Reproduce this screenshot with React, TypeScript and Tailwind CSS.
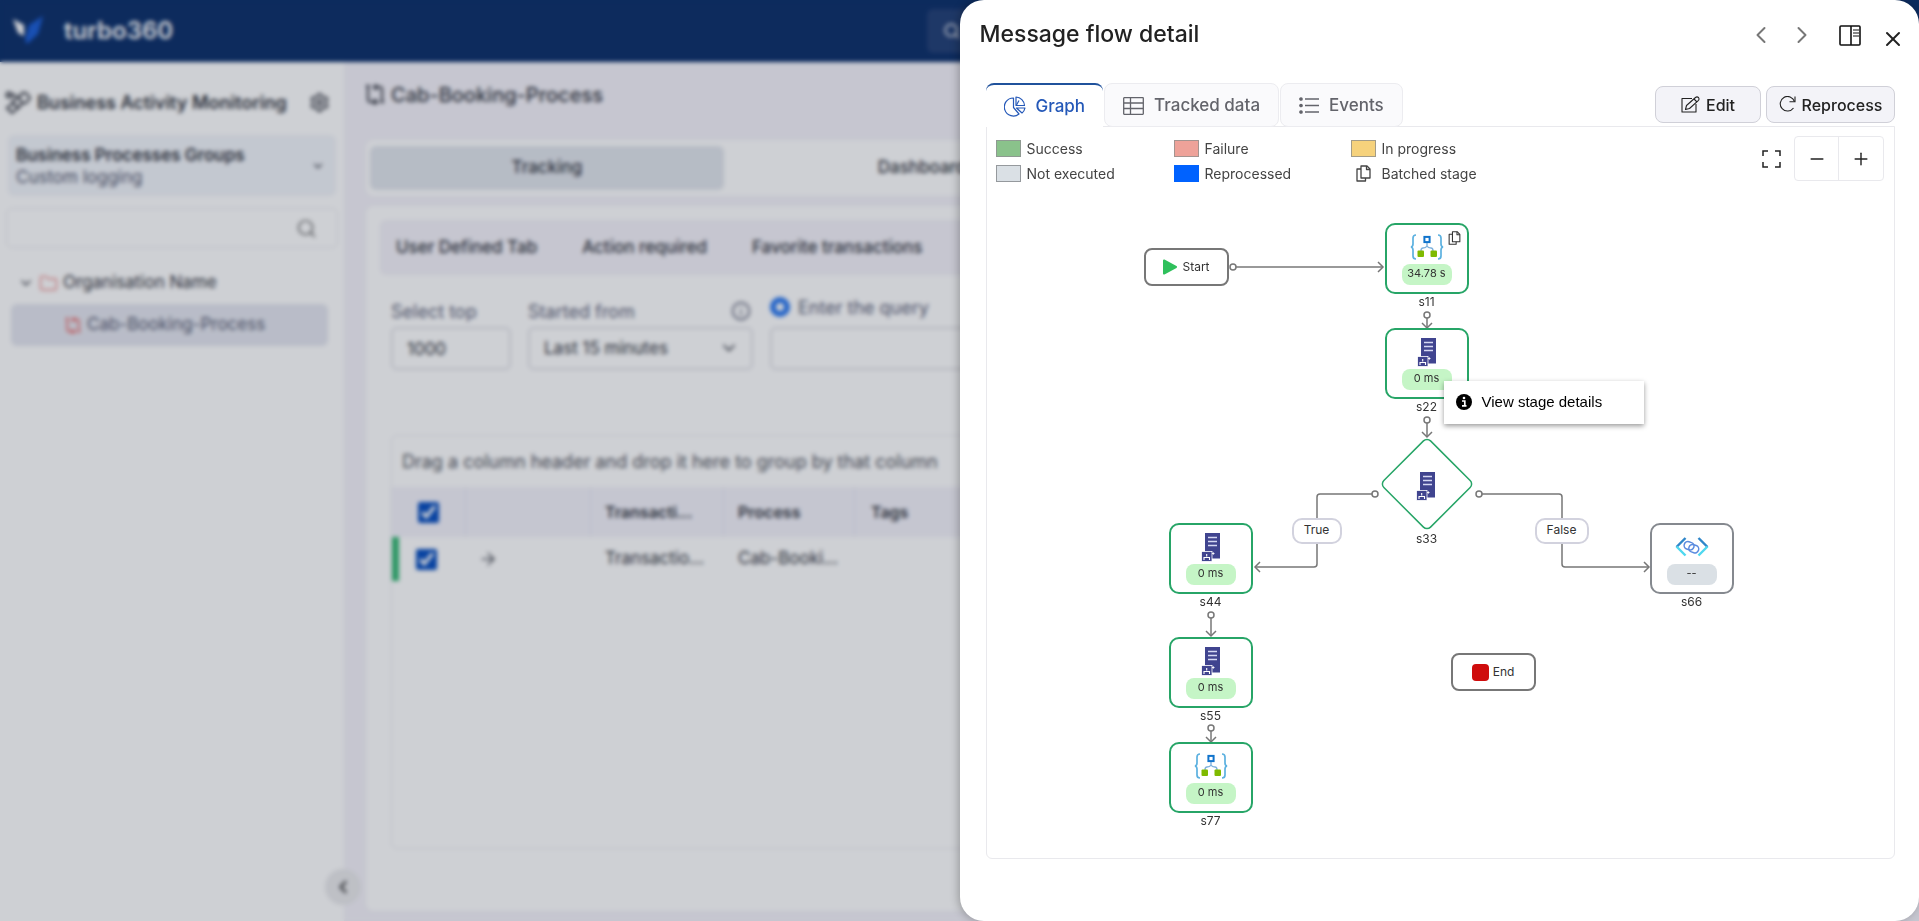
import { useState, type ReactNode } from 'react'
import {
  ArrowRight,
  ChevronDown,
  ChevronLeft,
  ChevronRight,
  Folder,
  Info,
  Minus,
  Plus,
  Search,
  Settings,
  X,
} from 'lucide-react'

type IconKind = 'logic' | 'server' | 'api'

type Stage = {
  id: string
  x: number
  y: number
  icon: IconKind
  time: string
  executed: boolean
  batched?: boolean
}

const STAGES: Stage[] = [
  { id: 's11', x: 398, y: 96, icon: 'logic', time: '34.78 s', executed: true, batched: true },
  { id: 's22', x: 398, y: 201, icon: 'server', time: '0 ms', executed: true },
  { id: 's44', x: 182, y: 396, icon: 'server', time: '0 ms', executed: true },
  { id: 's55', x: 182, y: 510, icon: 'server', time: '0 ms', executed: true },
  { id: 's77', x: 182, y: 615, icon: 'logic', time: '0 ms', executed: true },
  { id: 's66', x: 663, y: 396, icon: 'api', time: '--', executed: false },
]

// start circle, path and arrow head of every connector
const EDGES = [
  { cx: 246, cy: 140, line: 'M249 140H395', head: 'M391 135L396 140L391 145' },
  { cx: 440, cy: 188, line: 'M440 191V200', head: 'M435 196L440 201L445 196' },
  { cx: 440, cy: 293, line: 'M440 296V309', head: 'M435 305L440 310L445 305' },
  { cx: 388, cy: 367, line: 'M385 367H333Q330 367 330 370V437Q330 440 327 440H269', head: 'M273 435L268 440L273 445' },
  { cx: 492, cy: 367, line: 'M495 367H572Q575 367 575 370V437Q575 440 578 440H661', head: 'M657 435L662 440L657 445' },
  { cx: 224, cy: 488, line: 'M224 491V508', head: 'M219 504L224 509L229 504' },
  { cx: 224, cy: 601, line: 'M224 604V614', head: 'M219 610L224 615L229 610' },
]

const LEGEND = [
  { label: 'Success', color: 'bg-[#8ac28b] border-[#8f9a92]' },
  { label: 'Failure', color: 'bg-[#eea299] border-[#a39490]' },
  { label: 'In progress', color: 'bg-[#f6d27c] border-[#a39c88]' },
  { label: 'Not executed', color: 'bg-[#dae0e5] border-[#95999d]' },
  { label: 'Reprocessed', color: 'bg-[#0062ff] border-[#0062ff]' },
]

function LogoIcon() {
  return (
    <svg width="32" height="30" viewBox="0 0 32 30">
      <path d="M1 3L12 9V20L6 17Z" fill="#ffffff" />
      <path d="M31 0L26 18L15 28L13 24L17 9Z" fill="#1d5fd6" />
    </svg>
  )
}

function ActivityIcon() {
  return (
    <svg width="27" height="24" viewBox="0 0 27 24" fill="none" stroke="currentColor" strokeWidth="2">
      <path d="M9 12L14 17L8 22L3 17Z" />
      <path d="M8 12L13 6H16M14 17L18 13" />
      <path d="M18 2H22L26 7L22 12H18L15 7Z" />
      <circle cx="5" cy="4" r="2.500" />
      <path d="M7 4H12" />
    </svg>
  )
}

function ProcessIcon({ className }: { className?: string }) {
  return (
    <svg width="22" height="21" viewBox="0 0 22 21" fill="none" stroke="currentColor" strokeWidth="2" className={className}>
      <path d="M2 2H6M4 2V15Q4 18 7 18H12M10 15L13 18L10 20.500" />
      <path d="M18 19V6Q18 3 16 3H11M12.500 0.500L10 3L12.500 6M16 18H20" />
    </svg>
  )
}

function PieIcon() {
  return (
    <svg width="22" height="21" viewBox="0 0 22 21" fill="none" stroke="currentColor" strokeWidth="1.2" strokeLinejoin="round">
      <path d="M9.500 2A9 9 0 1 0 15 18L9.500 11.500Z" />
      <path d="M12 1V9.500H20.500A9 9 0 0 0 12 1Z" />
      <path d="M15 4.500L12.500 9" />
      <path d="M12.500 12H21A8.500 8.500 0 0 1 18 17Z" />
    </svg>
  )
}

function TableIcon() {
  return (
    <svg width="21" height="18" viewBox="0 0 21 18" fill="none" stroke="currentColor" strokeWidth="1.3">
      <rect x="0.700" y="0.700" width="19.600" height="16.600" rx="0.500" />
      <path d="M7.500 1V17M1 6H20M1 11.500H20" />
    </svg>
  )
}

function ListIcon() {
  return (
    <svg width="20" height="17" viewBox="0 0 20 17" stroke="currentColor" strokeWidth="1.3" fill="currentColor">
      <path d="M6 2H20M6 8.500H20M6 15H20" />
      <circle cx="2" cy="2" r="1.200" />
      <circle cx="2" cy="8.500" r="1.200" />
      <circle cx="2" cy="15" r="1.200" />
    </svg>
  )
}

function EditIcon() {
  return (
    <svg width="19" height="17" viewBox="0 0 19 17" fill="none" stroke="currentColor" strokeWidth="1.100" strokeLinejoin="round">
      <path d="M11 2.500H1V16H15V8" />
      <path d="M5.500 9.500L14.500 1.500Q16 0.300 17.500 1.500Q18.500 3 17.500 4.300L8.500 12.500L4.500 13.500Z" />
      <path d="M13 3L16 6" />
    </svg>
  )
}

function RedoIcon() {
  return (
    <svg width="17" height="17" viewBox="0 0 17 17" fill="none" stroke="currentColor" strokeWidth="1.100">
      <path d="M14.500 12A7.300 7.300 0 1 1 15.500 5.500" />
      <path d="M16 0.500V5.700H10.500" />
    </svg>
  )
}

function CopyIcon({ className }: { className?: string }) {
  return (
    <svg width="15" height="17" viewBox="0 0 15 17" fill="none" stroke="currentColor" strokeWidth="1.300" strokeLinejoin="round" className={className}>
      <path d="M5 1H11L14 4V13H5Z" />
      <path d="M10.500 1V4.500H14" />
      <path d="M5 4H1V16H9.500V13" />
    </svg>
  )
}

function PanelIcon() {
  return (
    <svg width="22" height="21" viewBox="0 0 22 21" fill="none" stroke="#111111" strokeWidth="1.600">
      <rect x="1" y="1" width="20" height="19" rx="1" />
      <path d="M12 1V20" />
      <path d="M14 5H20M14 8H20M14 11H20" strokeWidth="1" />
    </svg>
  )
}

function FullscreenIcon() {
  return (
    <svg width="19" height="18" viewBox="0 0 19 18" fill="none" stroke="#222222" strokeWidth="1.500">
      <path d="M1 6V1H6M13 1H18V6M18 12V17H13M6 17H1V12" />
    </svg>
  )
}

function LogicIcon() {
  return (
    <svg width="34" height="26" viewBox="0 0 34 26" fill="none">
      <path d="M6 1Q3 1 3 4V10Q3 12.500 1 13Q3 13.500 3 16V22Q3 25 6 25M28 1Q31 1 31 4V10Q31 12.500 33 13Q31 13.500 31 16V22Q31 25 28 25" stroke="#5cb1e0" strokeWidth="1.700" />
      <path d="M17 8V12M17 12Q16 14 13 14Q11 14 11 17M17 12Q18 14 21 14Q23 14 23 17" stroke="#7fb2dd" strokeWidth="1.400" />
      <rect x="14.400" y="2.900" width="5.200" height="5.200" fill="#ffffff" stroke="#1174cc" strokeWidth="2" />
      <rect x="7.500" y="16.500" width="6.500" height="6.500" rx="1" fill="#7fba00" />
      <rect x="20.500" y="16.500" width="6.500" height="6.500" rx="1" fill="#7fba00" />
    </svg>
  )
}

function ServerIcon() {
  return (
    <svg width="20" height="29" viewBox="0 0 20 29" fill="none">
      <rect x="4" y="0" width="15" height="25.500" fill="#40448f" />
      <path d="M7 4.500H16M7 8.500H16M7 12.500H16" stroke="#d5d8f3" strokeWidth="1.600" />
      <rect x="0.500" y="18.500" width="10.500" height="10" fill="#40448f" stroke="#ffffff" strokeWidth="0.800" />
      <path d="M5.700 21V23.500M3 27V24.500H8.500V27" stroke="#ffffff" strokeWidth="1.100" />
      <path d="M11 20.500H13.500M12.300 19.300V21.700" stroke="#ffffff" strokeWidth="0.900" />
    </svg>
  )
}

function ApiIcon() {
  return (
    <svg width="34" height="20" viewBox="0 0 34 20" fill="none" strokeWidth="2.400">
      <path d="M10.500 1L1.500 10" stroke="#2f86c9" />
      <path d="M1.500 9.500L10.500 18.500" stroke="#4fd8ef" />
      <path d="M23.500 1L32.500 10" stroke="#2f86c9" />
      <path d="M32.500 9.500L23.500 18.500" stroke="#4fd8ef" />
      <rect x="9" y="5" width="10" height="7.500" rx="3.700" transform="rotate(18 14 9)" stroke="#5b8bdf" strokeWidth="1.500" />
      <rect x="14" y="8" width="10" height="7.500" rx="3.700" transform="rotate(18 19 11)" stroke="#5b8bdf" strokeWidth="1.500" />
    </svg>
  )
}

function StageIcon({ kind }: { kind: IconKind }) {
  if (kind === 'logic') return <LogicIcon />
  if (kind === 'api') return <ApiIcon />
  return <ServerIcon />
}

function StageNode({ stage }: { stage: Stage }) {
  return (
    <div className="absolute flex w-[84px] flex-col items-center" style={{ left: stage.x, top: stage.y }}>
      <div
        className={`flex h-[71px] w-full flex-col items-center rounded-[10px] border-2 bg-white ${
          stage.executed ? 'border-[#27a567]' : 'border-[#85898f]'
        }`}
      >
        <div className="flex h-[38px] items-center justify-center pt-[6px]">
          <StageIcon kind={stage.icon} />
        </div>
        <span
          className={`mt-px flex h-[21px] w-[50px] items-center justify-center rounded-lg pb-[2px] text-[11px] text-[#333333] ${
            stage.executed ? 'bg-[#c5f5c6]' : 'bg-[#dae0e5]'
          }`}
        >
          {stage.time}
        </span>
      </div>
      <span className="text-[12px] leading-4 text-[#333333]">{stage.id}</span>
      {stage.batched && <CopyIcon className="absolute top-2 right-2 h-[14px] w-[13px] text-[#333333]" />}
    </div>
  )
}

function FlowGraph() {
  return (
    <div className="absolute inset-0">
      <svg className="absolute inset-0 h-full w-full" fill="none" stroke="#777777" strokeWidth="1.500">
        {EDGES.map((e) => (
          <g key={e.line}>
            <path d={e.line} />
            <path d={e.head} />
            <circle cx={e.cx} cy={e.cy} r="3" fill="#ffffff" />
          </g>
        ))}
        <rect x="407" y="324" width="66" height="66" rx="5" transform="rotate(45 440 357)" fill="#ffffff" stroke="#27a567" />
      </svg>

      <div className="absolute top-[121px] left-[157px] flex h-[38px] w-[85px] items-center justify-center gap-1 rounded-lg border-2 border-[#777777] bg-white text-[12px] text-[#333333]">
        <svg width="16" height="16" viewBox="0 0 16 16">
          <path d="M2 1.500L14 8L2 14.500Z" fill="#2fc05c" stroke="#2fc05c" strokeWidth="2" strokeLinejoin="round" />
        </svg>
        Start
      </div>
      <div className="absolute top-[526px] left-[464px] flex h-[38px] w-[85px] items-center justify-center gap-1 rounded-lg border-2 border-[#777777] bg-white text-[12px] text-[#333333]">
        <span className="size-[17px] rounded-sm bg-[#cf0c0c]" />
        End
      </div>

      {STAGES.map((s) => (
        <StageNode key={s.id} stage={s} />
      ))}

      <div className="absolute top-[345px] left-[429px]">
        <ServerIcon />
      </div>
      <span className="absolute top-[404px] left-[428px] w-6 text-center text-[12px] leading-4 text-[#333333]">s33</span>

      <span className="absolute top-[391px] left-[305px] flex h-[26px] w-[50px] items-center justify-center rounded-[10px] border-2 border-[#d2d2de] bg-white pb-[2px] text-[12px] text-[#333333]">
        True
      </span>
      <span className="absolute top-[391px] left-[548px] flex h-[26px] w-[54px] items-center justify-center rounded-[10px] border-2 border-[#d2d2de] bg-white pb-[2px] text-[12px] text-[#333333]">
        False
      </span>

      <div className="absolute top-[254px] left-[457px] flex h-[43px] w-[200px] items-center bg-white px-3 pb-px shadow-[0_2px_5px_rgba(0,0,0,0.4)]">
        <button className="flex items-center gap-[10px] font-['Liberation_Sans',Arial,sans-serif] text-[15px] text-black">
          <svg width="16" height="16" viewBox="0 0 16 16">
            <circle cx="8" cy="8" r="8" fill="#000000" />
            <path d="M6 7H8.800V11.500M6 11.800H10.500" stroke="#ffffff" strokeWidth="1.700" fill="none" />
            <circle cx="8" cy="4" r="1.300" fill="#ffffff" />
          </svg>
          View stage details
        </button>
      </div>
    </div>
  )
}

function Tab({
  icon,
  label,
  active,
  onClick,
}: {
  icon: ReactNode
  label: string
  active: boolean
  onClick: () => void
}) {
  return (
    <button
      role="tab"
      aria-selected={active}
      onClick={onClick}
      className={`flex h-11 items-center gap-[10px] rounded-t-lg px-[18px] pt-px text-[17px] font-medium ${
        active
          ? 'border-t-2 border-[#20529c] bg-white text-[#2458b8]'
          : 'rounded-b-lg border border-[#ececf0] bg-[#fafafc] text-[#63646b]'
      }`}
    >
      {icon}
      {label}
    </button>
  )
}

function FlowDrawer() {
  const [tab, setTab] = useState('Graph')

  return (
    <section
      aria-label="Message flow detail"
      className="absolute inset-y-0 right-0 flex w-1/2 flex-col rounded-3xl bg-white pr-6 pb-[62px] pl-[26px] shadow-[-2px_0_8px_rgba(0,0,0,0.25)]"
    >
      <header className="-mx-[6px] flex h-[83px] shrink-0 items-start justify-between">
        <h2 className="pt-[18px] text-[23px] leading-8 font-medium text-[#222222]">Message flow detail</h2>
        <div className="-mr-1 flex items-center pt-[19px]">
          <button aria-label="Previous" className="mr-[13px] text-[#777777]">
            <ChevronLeft size={28} strokeWidth={1.7} />
          </button>
          <button aria-label="Next" className="mr-[23px] text-[#777777]">
            <ChevronRight size={28} strokeWidth={1.7} />
          </button>
          <button aria-label="Dock panel" className="mr-5">
            <PanelIcon />
          </button>
          <button aria-label="Close" className="pt-2 text-[#222222]">
            <X size={24} strokeWidth={2} />
          </button>
        </div>
      </header>

      <div className="flex h-[43px] shrink-0 items-start justify-between">
        <div role="tablist" className="relative z-10 flex gap-px">
          <Tab icon={<PieIcon />} label="Graph" active={tab === 'Graph'} onClick={() => setTab('Graph')} />
          <Tab icon={<TableIcon />} label="Tracked data" active={tab === 'Tracked data'} onClick={() => setTab('Tracked data')} />
          <Tab icon={<ListIcon />} label="Events" active={tab === 'Events'} onClick={() => setTab('Events')} />
        </div>
        <div className="flex gap-[5px] pt-[3px]">
          <button className="flex h-[37px] w-[106px] items-center justify-center gap-[6px] rounded-lg border border-[#d0d0d8] bg-[#f3f3f8] text-[16px] font-medium text-[#222222]">
            <EditIcon />
            Edit
          </button>
          <button className="flex h-[37px] w-[129px] items-center justify-center gap-[6px] rounded-lg border border-[#d0d0d8] bg-[#f3f3f8] text-[16px] font-medium text-[#222222]">
            <RedoIcon />
            Reprocess
          </button>
        </div>
      </div>

      <div className="relative flex-1 rounded-b-md border border-[#e9e9ed]">
        <FlowGraph />
        <div className="relative flex items-start justify-between pt-[9px] pr-[10px] pl-[9px]">
          <ul className="grid grid-cols-[178px_177px_178px] text-[14px] leading-[25px] text-[#444444]">
            {LEGEND.map((l) => (
              <li key={l.label} className="flex items-center gap-[6px]">
                <span className={`h-[17px] w-[25px] border ${l.color}`} />
                {l.label}
              </li>
            ))}
            <li className="flex items-center gap-[6px]">
              <span className="flex w-[25px] justify-center">
                <CopyIcon />
              </span>
              Batched stage
            </li>
          </ul>
          <div className="flex items-center gap-[13px]">
            <button aria-label="Fullscreen">
              <FullscreenIcon />
            </button>
            <div className="flex rounded border border-[#e9e9ed] text-[#222222]">
              <button aria-label="Zoom out" className="flex h-[43px] w-11 items-center justify-center border-r border-[#e9e9ed]">
                <Minus size={20} strokeWidth={1.7} />
              </button>
              <button aria-label="Zoom in" className="flex h-[43px] w-11 items-center justify-center">
                <Plus size={20} strokeWidth={1.7} />
              </button>
            </div>
          </div>
        </div>
      </div>
    </section>
  )
}

function Sidebar() {
  return (
    <aside className="relative w-[344px] shrink-0 bg-white text-[#333640]">
      <div className="flex h-[73px] items-center pt-2 pr-[14px] pl-1">
        <ActivityIcon />
        <h1 className="flex-1 pl-[6px] text-[18px] font-semibold">Business Activity Monitoring</h1>
        <button aria-label="Settings">
          <Settings size={21} />
        </button>
      </div>
      <button className="mx-2 flex h-[61px] w-[328px] items-center justify-between rounded-md bg-[#f2f5fa] pr-[11px] pl-2 text-left">
        <span className="flex flex-col leading-[22px]">
          <span className="text-[17px] font-semibold">Business Processes Groups</span>
          <span className="text-[17px] text-[#565a70]">Custom logging</span>
        </span>
        <ChevronDown size={14} strokeWidth={2} />
      </button>
      <div className="mx-[6px] mt-3 flex h-10 items-center rounded-md border border-[#ebebf0] pr-5">
        <input aria-label="Search processes" className="h-full flex-1 bg-transparent px-3 outline-none" />
        <Search size={21} strokeWidth={1.7} className="text-[#666666]" />
      </div>
      <ul className="mt-[14px] text-[17px]">
        <li className="flex h-[42px] items-center pl-[18px]">
          <ChevronDown size={16} className="mr-[5px]" />
          <Folder size={19} strokeWidth={1.8} className="mr-[5px] text-[#f08c8c]" />
          Organisation Name
        </li>
        <li className="mr-4 ml-[11px] flex h-[42px] items-center rounded-md bg-[#e5e7f0] pl-[53px] text-[#565a70]">
          <ProcessIcon className="mr-[5px] h-[17px] w-[18px] text-[#e86464]" />
          Cab-Booking-Process
        </li>
      </ul>
      <button
        aria-label="Collapse sidebar"
        className="absolute -right-[17px] bottom-4 flex size-9 items-center justify-center rounded-full bg-[#ebebed] text-[#555555]"
      >
        <ChevronLeft size={20} strokeWidth={3} />
      </button>
    </aside>
  )
}

function TransactionGrid() {
  return (
    <div className="mr-4 ml-[25px] h-[414px] overflow-hidden rounded-md border border-[#eeeef2] text-[17px]">
      <p className="flex h-[51px] items-center pl-[10px] text-[18px] text-[#55575f]">
        Drag a column header and drop it here to group by that column
      </p>
      <table className="w-full table-fixed border-separate border-spacing-0 text-left">
        <colgroup>
          <col className="w-[74px]" />
          <col className="w-[125px]" />
          <col className="w-[133px]" />
          <col className="w-[131px]" />
          <col />
        </colgroup>
        <thead className="bg-[#f4f3fb]">
          <tr className="h-[50px]">
            <th className="border-r border-[#e8e8f0] pl-[26px]">
              <input type="checkbox" aria-label="Select all" defaultChecked className="block size-[21px] accent-[#0a50c0]" />
            </th>
            <th className="border-r border-[#e8e8f0]" />
            <th className="border-r border-[#e8e8f0] pl-[14px] text-[16px] font-semibold">Transacti...</th>
            <th className="border-r border-[#e8e8f0] pl-[14px] text-[16px] font-semibold">Process</th>
            <th className="pl-4 text-[16px] font-semibold">Tags</th>
          </tr>
        </thead>
        <tbody>
          <tr className="h-[44px]">
            <td className="border-l-[7px] border-[#35b873] pl-[17px]">
              <input type="checkbox" aria-label="Select transaction" defaultChecked className="block size-[21px] accent-[#0a50c0]" />
            </td>
            <td className="pl-3">
              <ArrowRight size={20} strokeWidth={1.5} />
            </td>
            <td className="pl-[14px]">Transactio...</td>
            <td className="pl-[14px]">Cab-Booki...</td>
            <td />
          </tr>
        </tbody>
      </table>
    </div>
  )
}

function TrackingPage() {
  return (
    <main className="flex min-w-0 flex-1 flex-col bg-[#f5f3fa] pr-16 pb-[10px] pl-[22px] text-[#333640]">
      <div className="flex h-[78px] items-center pb-[13px]">
        <ProcessIcon className="-ml-[2px] mr-[5px]" />
        <h2 className="text-[20px] font-medium">Cab-Booking-Process</h2>
      </div>
      <div className="grid h-14 grid-cols-4 gap-[22px] rounded-lg bg-white p-1 text-[17px] font-medium">
        <button className="h-[44px] self-center rounded-md bg-[#e2e6ed]">Tracking</button>
        <button className="pl-2">Dashboards</button>
        <button />
        <button />
      </div>

      <div className="mt-[10px] flex-1 rounded-lg bg-white">
        <nav className="mx-[14px] mt-[14px] flex h-[55px] items-center gap-[45px] rounded-md bg-[#f5f3fa] pl-4 text-[17px] font-medium">
          <a href="#user-defined">User Defined Tab</a>
          <a href="#action-required">Action required</a>
          <a href="#favorites">Favorite transactions</a>
        </nav>
        <div className="flex h-[160px] items-start gap-[17px] pt-5 pl-[25px] text-[17px]">
          <div className="flex w-[120px] flex-col">
            <label htmlFor="top" className="flex h-8 items-center text-[18px] text-[#60647a]">Select top</label>
            <input id="top" defaultValue="1000" className="h-[43px] w-full rounded-md border-2 border-[#e2e2e8] px-[14px]" />
          </div>
          <div className="relative flex w-[225px] flex-col">
            <div className="flex h-8 items-center justify-between pr-[2px] text-[18px] text-[#60647a]">
              <label htmlFor="from">Started from</label>
              <Info size={20} />
            </div>
            <select id="from" className="h-[43px] w-full appearance-none rounded-md border-2 border-[#e2e2e8] bg-white px-[14px]">
              <option>Last 15 minutes</option>
            </select>
            <ChevronDown size={20} className="pointer-events-none absolute right-[14px] bottom-3" />
          </div>
          <div className="flex flex-1 flex-col">
            <label className="flex h-8 items-center gap-2 pb-2 text-[18px] text-[#60647a]">
              <input type="radio" name="mode" defaultChecked className="size-5 appearance-none rounded-full border-[6px] border-[#2a78f0] bg-white" />
              Enter the query
            </label>
            <input aria-label="Query" className="h-[43px] w-full rounded-md border-2 border-[#e2e2e8] px-4" />
          </div>
        </div>
        <TransactionGrid />
      </div>
    </main>
  )
}

export default function App() {
  return (
    <div className="relative h-screen overflow-hidden font-[Inter,sans-serif]">
      <div className="flex h-full flex-col">
        <header className="flex h-[62px] shrink-0 items-center bg-[#0e316b] pl-3">
          <LogoIcon />
          <span className="flex-1 pl-5 text-[24px] font-semibold text-white">turbo360</span>
          <label className="mr-[400px] flex h-11 w-[592px] items-center gap-2 rounded-md bg-[#244177] pl-4 text-white">
            <Search size={18} />
            <input aria-label="Search" className="flex-1 bg-transparent outline-none" />
          </label>
        </header>
        <div className="flex min-h-0 flex-1">
          <Sidebar />
          <TrackingPage />
        </div>
      </div>
      <div className="absolute inset-0 bg-[#0a1228]/20 backdrop-blur-[2px]" />
      <FlowDrawer />
    </div>
  )
}
